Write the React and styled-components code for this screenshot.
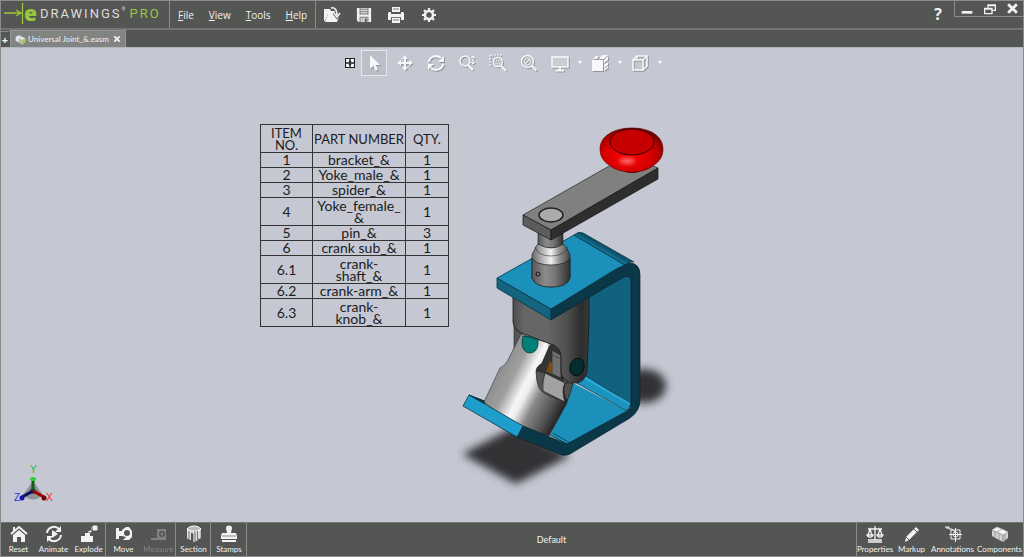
import React from 'react'
import styled, { createGlobalStyle } from 'styled-components'

const GlobalStyle = createGlobalStyle`
    * {
        box-sizing: border-box;
    }
    body {
        margin: 0;
        font-family: 'Open Sans', 'Noto Sans', sans-serif;
        color: #f2f2f2;
    }
    button {
        font: inherit;
        color: inherit;
        background: none;
        border: 0;
        padding: 0;
    }
    svg {
        display: block;
        flex: none;
    }
`

const Window = styled.div`
    display: flex;
    flex-direction: column;
    min-height: 100vh;
    background: #545654;
    border: 1px solid #8b8d8b;
`
const Header = styled.header`
    display: flex;
    height: 29px;
    border-bottom: 2px solid #747674;
`
const Brand = styled.div`
    display: flex;
    align-items: center;
    width: 169px;
    padding: 0 0 3px 3px;
    border-right: 1px solid #8b8d8b;
    font-family: Roboto, sans-serif;
    font-size: 13px;
    letter-spacing: 2px;
    color: #dcdedc;
`
const BrandE = styled.b`
    width: 16px;
    font-family: 'Open Sans', sans-serif;
    font-size: 21px;
    font-weight: 800;
    line-height: 20px;
    letter-spacing: 0;
    color: #9bc53d;
`
const BrandPro = styled.span`
    margin-left: 4px;
    color: #9bc53d;
`
const Reg = styled.sup`
    font-size: 5px;
    letter-spacing: 0;
    line-height: 5px;
    align-self: flex-start;
    margin-top: 6px;
`
const MenuBar = styled.nav`
    display: flex;
    align-items: center;
    gap: 15px;
    padding: 0 8px;
    border-right: 1px solid #8b8d8b;
`
const MenuItem = styled.button`
    font-size: 10px;
    line-height: 16px;
    &::first-letter {
        text-decoration: underline;
    }
`
const QuickBar = styled.div`
    display: flex;
    align-items: center;
    gap: 15px;
    padding-left: 7px;
`
const IconButton = styled.button`
    display: flex;
    align-items: center;
    justify-content: center;
`
const HeaderRight = styled.div`
    display: flex;
    align-items: flex-start;
    margin-left: auto;
`
const HelpButton = styled.button`
    width: 32px;
    padding-top: 2px;
    font-size: 16px;
    font-weight: 700;
    line-height: 22px;
`
const WindowControls = styled.div`
    display: flex;
    align-items: center;
    justify-content: space-between;
    width: 69px;
    height: 16px;
    padding: 0 4px 0 6px;
    border: solid #8b8d8b;
    border-width: 0 0 1px 1px;
`
const TabBar = styled.div`
    display: flex;
    align-items: flex-end;
    height: 17px;
`
const AddTab = styled.button`
    width: 8px;
    height: 16px;
    border-top: 1px solid #8b8d8b;
    font-size: 11px;
    font-weight: 700;
    line-height: 14px;
`
const Tab = styled.div`
    display: flex;
    align-items: center;
    gap: 2px;
    height: 17px;
    margin-left: 1px;
    padding: 0 4px;
    background: #828482;
    border: 1px dotted #a3a5a3;
    border-bottom: 0;
    font-family: Lato, sans-serif;
    font-size: 8px;
    line-height: 12px;
`
const TabClose = styled.button`
    margin-left: 2px;
`
const Canvas = styled.main`
    position: relative;
    flex: 1;
    background: #c5c8d3;
    border-top: 1px solid #b2b5bd;
    color: #1c1c1c;
`
const Toolbar = styled.div`
    display: flex;
    align-items: center;
    justify-content: center;
    gap: 5px;
    padding: 2px 18px 0 0;
`
const Tool = styled(IconButton)`
    width: ${props => props.$small ? '11px' : '26px'};
    height: 26px;
    color: #f8f8f8;
    border: ${props => props.$active ? '1px solid #e6e8ee' : '0'};
    background: ${props => props.$active ? '#bcbfc7' : 'none'};
    svg {
        filter: ${props => props.$small ? 'none' : 'drop-shadow(1px 1px 0 #92959d)'};
    }
`
const Caret = styled.button`
    width: 4px;
    height: 4px;
    border: solid transparent;
    border-width: 3px 2px 0;
    border-top-color: white;
`
const Stage = styled.div`
    display: flex;
    justify-content: center;
    gap: 8px;
    padding: 43px 83px 0 0;
`
const PartsTable = styled.table`
    align-self: flex-start;
    width: 188px;
    margin-top: 5px;
    border-collapse: collapse;
    table-layout: fixed;
    font-family: Lato, sans-serif;
    font-size: 14px;
    line-height: 12px;
    text-align: center;
    white-space: nowrap;
    th, td {
        padding: 0;
        border: 1px solid #333;
        font-weight: 400;
    }
    th {
        font-size: 13px;
    }
`
const Row = styled.tr`
    height: ${props => props.$tall ? '28px' : '15px'};
`
const Col = styled.col`
    width: ${props => props.$width};
`
const Triad = styled.svg`
    position: absolute;
    left: 10px;
    bottom: 16px;
    font: 10px 'Liberation Sans', sans-serif;
`
const Footer = styled.footer`
    display: flex;
    height: 34px;
    border-top: 1px solid #747674;
    font-family: Lato, sans-serif;
    font-size: 8px;
    line-height: 11px;
`
const Group = styled.div`
    display: flex;
    box-shadow: inset ${props => props.$right ? '1px' : '-1px'} 0 #8b8d8b;
`
const Command = styled.button`
    display: flex;
    flex-direction: column;
    align-items: center;
    justify-content: space-between;
    width: ${props => props.$width || '35px'};
    padding: 2px 0 1px;
    white-space: nowrap;
    opacity: ${props => props.disabled ? 0.28 : 1};
`
const Configuration = styled.div`
    flex: 1;
    align-self: center;
    text-align: center;
    font-size: 9px;
`

const paths = {
	open: <>
		<path d="M1 3h6l1 2h5v3H5l-3 7H1z" fill="currentColor" />
		<path d="M5 8h12l-3 8H2z" fill="currentColor" />
		<path d="M8 2c4-1 6 2 6 7M11 7l3 4 3-4" fill="none" stroke="#545654" strokeWidth="3" />
		<path d="M8 2c4-1 6 2 6 7M11 7l3 4 3-4" fill="none" stroke="currentColor" strokeWidth="1.6" />
	</>,
	save: <>
		<path d="M1 1h16v16H3l-2-2z" fill="currentColor" />
		<path d="M4 1h10v8H4zM4 11h10v6H4z" fill="#777977" />
		<path d="M5 2h8M5 4h8M5 6h8M5 8h8" stroke="currentColor" />
		<path d="M5 12h8v5H5z" fill="#c9cbc9" />
		<path d="M10 13h2v4h-2z" fill="#545654" />
	</>,
	print: <>
		<path d="M5 1h8v5H5z" fill="currentColor" />
		<path d="M2 6h2v2h10V6h2l1 1v7h-3v-2H4v2H1V7z" fill="currentColor" />
		<path d="M5 12h8v5H5z" fill="currentColor" />
		<path d="M4 11.5h10M6 14h6M6 3h6" stroke="#777977" />
	</>,
	gear: <>
		<circle cx="9" cy="9" r="4" fill="none" stroke="currentColor" strokeWidth="2.6" />
		<path d="M9 2v3M9 13v3M2 9h3M13 9h3M4 4l2 2M12 12l2 2M14 4l-2 2M4 14l2-2" stroke="currentColor" strokeWidth="2.2" />
	</>,
	grid: <>
		<path d="M1 1h16v16H1z" fill="#fff" stroke="#222" strokeWidth="2" />
		<path d="M9 1v16M1 9h16" fill="none" stroke="#222" strokeWidth="2.500" />
		<path d="M6 7l3-3 3 3zM6 11l3 3 3-3z" fill="#222" />
	</>,
	select: <path d="M5 1v14l3.5-3.3 2.2 5 2.3-1-2.2-4.8h4.5z" fill="currentColor" />,
	move: <path d="M9 1l3 4h-2v3h3V6l4 3-4 3v-2h-3v3h2l-3 4-3-4h2v-3H5v2L1 9l4-3v2h3V5H6z" fill="currentColor" />,
	rotate: <>
		<path d="M2 8a7 6 0 0 1 12-4M16 10a7 6 0 0 1-12 4" fill="none" stroke="currentColor" strokeWidth="2" />
		<path d="M17 2v6h-6zM1 16v-6h6z" fill="currentColor" />
	</>,
	zoom: <>
		<circle cx="7" cy="7" r="5" fill="none" stroke="currentColor" strokeWidth="1.5" />
		<path d="M10 11l5 5" stroke="currentColor" strokeWidth="2" />
		<path d="M15 2v8M13 4l2-2 2 2M13 8l2 2 2-2" fill="none" stroke="currentColor" />
	</>,
	zoomArea: <>
		<path d="M1 12V1h12" fill="none" stroke="currentColor" strokeDasharray="2 1" />
		<circle cx="9" cy="8" r="4.5" fill="none" stroke="currentColor" strokeWidth="1.4" />
		<path d="M7 6h4v4H7z" fill="none" stroke="currentColor" strokeDasharray="1 1" />
		<path d="M12 12l5 5" stroke="currentColor" strokeWidth="2" />
	</>,
	zoomFit: <>
		<circle cx="7.500" cy="7.500" r="6" fill="none" stroke="currentColor" strokeWidth="1.5" />
		<path d="M5 9a3 3 0 0 1 5-4M10 6a3 3 0 0 1-5 4M5 10l5-5" fill="none" stroke="currentColor" />
		<path d="M11.500 11.500l5 5" stroke="currentColor" strokeWidth="2" />
	</>,
	display: <>
		<path d="M1 3h16v10H1z" fill="#c9ccd3" stroke="currentColor" strokeWidth="1.5" />
		<path d="M9 13v3M5 16.500h8" stroke="currentColor" strokeWidth="2" />
	</>,
	perspective: <>
		<path d="M1 6h11v11H1z" fill="currentColor" />
		<path d="M2 5l3-3h3L6 5zM8 5l3-4h6l-4 4z" fill="currentColor" />
		<path d="M13 6l4-4v4l-4 3zM13 11l4-3v3l-4 3zM13 15l4-3v2l-4 3z" fill="currentColor" />
	</>,
	cube: <path d="M2 6h10v10H2zM2 6l4-4h10l-4 4M16 2v10l-4 4M6 2v4" fill="none" stroke="currentColor" strokeWidth="1.5" />,
	reset: <>
		<path d="M1 9l8-7 8 7" fill="none" stroke="currentColor" strokeWidth="2" />
		<path d="M3 2h2v4H3z" fill="currentColor" />
		<path d="M3 10l6-5 6 5v7h-4v-5H7v5H3z" fill="currentColor" />
	</>,
	animate: <>
		<path d="M2 8a7 7 0 0 1 12-4M16 10a7 7 0 0 1-12 4" fill="none" stroke="currentColor" strokeWidth="2" />
		<path d="M16 1v6h-6zM2 17v-6h6zM7 5l6 4-6 4z" fill="currentColor" />
	</>,
	explode: <>
		<path d="M1 11h4V8h5v3h3v6H1z" fill="currentColor" />
		<path d="M8 7h3V5M13 1h4v4h-4zM11 3h1" fill="currentColor" stroke="currentColor" />
	</>,
	moveBox: <>
		<path d="M1 3h3v11H1zM4 6h3v5H4zM7 5l4-3h3l3 4v6l-3 3H8l3-3-4-1z" fill="currentColor" />
		<circle cx="12" cy="8" r="3" fill="#545654" />
	</>,
	measure: <>
		<path d="M7 4h9v11H1v-2h6z" fill="currentColor" />
		<circle cx="12" cy="9" r="3" fill="#545654" />
		<circle cx="12" cy="9" r="1.500" fill="currentColor" />
	</>,
	section: <>
		<path d="M2 4c3-4 11-4 14 0v9l-3 2-4 2V9L6 8v7l-4-2z" fill="#b9bbb9" />
		<path d="M3 5v9M5 6v9M9 7v10M11 6v10M14 4v9M2 4c3 3 11 3 14 0M2 4c3-4 11-4 14 0" fill="none" stroke="#fff" />
		<path d="M4 6v8M10 6v10M12.500 6v9" stroke="#737573" />
	</>,
	stamps: <>
		<path d="M6 3a3 2.500 0 0 1 6 0c0 2-1 3-1 5h5l1 3v3H1v-3l1-3h5c0-2-1-3-1-5z" fill="currentColor" />
		<path d="M2 16h14" stroke="currentColor" strokeWidth="2" />
		<path d="M2 11h14" stroke="#888a88" />
	</>,
	properties: <path d="M9 1v14M2 4h14M4 4l-2 6h4zM14 4l-2 6h4zM1 10c1 3 5 3 6 0zM11 10c1 3 5 3 6 0zM2 15h14M2 17h14" fill="none" stroke="currentColor" strokeWidth="1.300" />,
	markup: <>
		<path d="M13 2l3 3L6 15l-4 2 1-5z" fill="currentColor" />
		<path d="M11 4l3 3M3 12l3 3" stroke="#545654" />
	</>,
	annotations: <>
		<path d="M1 2h4v2h3l3 3M7 5h9v9H7z" fill="none" stroke="currentColor" />
		<circle cx="11.500" cy="9.500" r="2.500" fill="none" stroke="currentColor" />
		<path d="M11.500 3v14M5 9.500h13M2 3h3" stroke="currentColor" />
	</>,
	components: <>
		<path d="M1 5l5-3 11 5v6l-5 4L1 11z" fill="#d2d4d2" />
		<path d="M1 5l11 5v7M12 10l5-3" fill="none" stroke="#858785" />
		<path d="M6 2l5 2-5 3-5-2zM11 4l6 3-5 3-6-3z" fill="#f4f4f4" stroke="#a4a6a4" strokeWidth=".6" />
		<path d="M4 6v6M8 8v7M14 9v6" stroke="#999b99" />
	</>,
	file: <>
		<path d="M1 5l5-3 11 5v6l-5 4L1 11z" fill="#e4e6e4" />
		<path d="M6 7l6 3v7l-6-3z" fill="#b4b6b4" />
		<path d="M12 10l5-3v6l-5 4z" fill="#9bc53d" />
	</>,
	close: <path d="M3 3l12 12M15 3L3 15" stroke="currentColor" strokeWidth="4" />,
	minimize: <path d="M1 14h16" stroke="currentColor" strokeWidth="4" />,
	restore: <>
		<path d="M6 7V3h11v8h-5M6 4h11" fill="none" stroke="currentColor" strokeWidth="2" />
		<path d="M1 8h11v8H1zM1 9h11" fill="none" stroke="currentColor" strokeWidth="2" />
	</>,
}

const Icon = ({ name, size = 18 }) => (
	<svg width={size} height={size} viewBox="0 0 18 18" aria-hidden="true">{paths[name]}</svg>
)

const tools = ['select', 'move', 'rotate', 'zoom', 'zoomArea', 'zoomFit']
const viewTools = ['display', 'perspective', 'cube']

const parts = [
	{ item: '1', name: 'bracket_&', qty: 1 },
	{ item: '2', name: 'Yoke_male_&', qty: 1 },
	{ item: '3', name: 'spider_&', qty: 1 },
	{ item: '4', name: <>Yoke_female_<br />&amp;</>, qty: 1, tall: true },
	{ item: '5', name: 'pin_&', qty: 3 },
	{ item: '6', name: 'crank sub_&', qty: 1 },
	{ item: '6.1', name: <>crank-<br />shaft_&amp;</>, qty: 1, tall: true },
	{ item: '6.2', name: 'crank-arm_&', qty: 1 },
	{ item: '6.3', name: <>crank-<br />knob_&amp;</>, qty: 1, tall: true },
]

const Gradient = ({ id, stops, ...rest }) => (
	<linearGradient id={id} {...rest}>
		{stops.map(([offset, color]) => <stop key={offset} offset={offset} stopColor={color} />)}
	</linearGradient>
)

const Model = () => (
	<svg width="224" height="376" viewBox="457 119 224 376" role="img" aria-label="Universal joint" strokeLinejoin="round">
		<defs>
			<filter id="soft" x="-30%" y="-30%" width="160%" height="160%"><feGaussianBlur stdDeviation="4" /></filter>
			<filter id="glow" x="-50%" y="-50%" width="200%" height="200%"><feGaussianBlur stdDeviation="2" /></filter>
			<Gradient id="neck" stops={[[0, '#555'], [0.35, '#8c8c8c'], [0.6, '#777'], [1, '#303030']]} />
			<Gradient id="shoulder" stops={[[0, '#6a6a6a'], [0.3, '#bbb'], [0.5, '#f2f2f2'], [0.7, '#999'], [1, '#444']]} />
			<Gradient id="yoke" stops={[[0, '#4c4c4c'], [0.15, '#666'], [0.45, '#666'], [0.7, '#505050'], [0.9, '#2c2c2c'], [1, '#3a3a3a']]} />
			<Gradient id="lower" gradientUnits="userSpaceOnUse" x1="489" y1="380" x2="559" y2="416" stops={[[0, '#8a8a8a'], [0.25, '#9e9e9e'], [0.43, '#f6f6f6'], [0.5, '#eee'], [0.65, '#888'], [0.85, '#555'], [1, '#262626']]} />
			<Gradient id="fold" gradientUnits="userSpaceOnUse" x1="604" y1="247" x2="600" y2="254" stops={[[0, '#0c526c'], [1, '#1a90ba']]} />
			<radialGradient id="red" cx=".45" cy=".6" r=".62">
				<stop offset="0" stopColor="#f00" />
				<stop offset=".6" stopColor="#d80000" />
				<stop offset=".8" stopColor="#b00000" />
				<stop offset="1" stopColor="#600" />
			</radialGradient>
		</defs>
		<g filter="url(#soft)" fill="#303134">
			<path d="M462 454l54-28 54 30-54 28z" />
			<ellipse cx="644" cy="386" rx="22" ry="17" />
		</g>

		<path d="M585 288l47-14v132l-49-28z" fill="#11627f" />
		<path d="M571 382l56 29-59 34-18-10 16-32z" fill="#1a90ba" />
		<path d="M583 374l48 30-4 7-54-30z" fill="#1c93bf" stroke="#0a3544" strokeWidth=".7" />
		<path d="M583 377l47 27" stroke="#2cabd8" strokeWidth="2" />
		<path d="M550 435l17 9M553 433l17 10" stroke="#0a3544" strokeWidth=".8" />

		<path d="M469 395l18 7-3 2z" fill="#0b3848" stroke="#06222c" />
		<path d="M514 325l8 8-1 10-7 6z" fill="#555" stroke="#222" strokeWidth=".6" />
		<path d="M521 334l-6 12-7 14q-2 5-8 8l-16 34q30 25 65 34l18-33 2-20-20-20v-20z" fill="url(#lower)" stroke="#333" strokeWidth=".6" />
		<path d="M549 347l5-6 9 12v28l4 10-24-3 2-15-9-2q0-4 6-8z" fill="#343434" stroke="#111" strokeWidth=".6" />
		<path d="M552 350l9 5v23l-9-4z" fill="#707070" stroke="#222" strokeWidth=".6" />
		<path d="M552 350q5 4 9 5M552 355l9 4" stroke="#333" strokeWidth=".6" fill="none" />
		<path d="M550 361l2 2v11l-6-3z" fill="#7a4b0b" />
		<path d="M536 371l9 2q-3 7-1 17 8 7 21 11-20-4-26-13-3-7-3-17z" fill="#555" stroke="#222" strokeWidth=".6" />
		<path d="M545 373l20 10q-4 8 0 19l-22-11q-1-9 2-18z" fill="#a2a2a2" stroke="#222" strokeWidth=".7" />
		<path d="M565 383h8q-2 10-6 18-5-8-2-18z" fill="#505050" stroke="#111" strokeWidth=".6" />
		<path d="M513 297v25q1 10 14 13l21 8q13 3 13 14v17q4 9 14 9 9 0 12-11l2-52v-25z" fill="url(#yoke)" stroke="#161616" strokeWidth=".8" />
		<path d="M523 336q7 0 15 4v4a8 9 0 0 1-16 0q0-4 1-8z" fill="#008079" stroke="#082827" strokeWidth=".7" />
		<ellipse cx="577" cy="367" rx="7" ry="9" transform="rotate(18 577 367)" fill="#042d30" stroke="#000" strokeWidth=".7" />

		<path d="M551 309l60-37q11-8 18-9 11 0 11 12v125q0 11-10 18l-60 36q-4 2-8 1l-45-18 6-11 44 18 60-33q4-3 4-8V281q0-6-7-4l-21 12-52 31z" fill="#0b3848" stroke="#06222c" strokeWidth=".7" />
		<path d="M469 395l54 31-6 11-54-31z" fill="#1e9ecc" stroke="#0a3544" strokeWidth=".8" />
		<path d="M497 278l54 31v11l-54-32z" fill="#12647f" stroke="#0a3544" strokeWidth=".8" />
		<path d="M497 278l77-43 51 30q-6 2-14 7l-60 37z" fill="#1a90ba" stroke="#0a3544" strokeWidth=".8" />
		<path d="M574 235q4-4 9-2l51 29q-3-1-9 3z" fill="url(#fold)" stroke="#0a3544" strokeWidth=".8" />

		<path d="M538 228h25v20h-25z" fill="url(#neck)" stroke="#222" strokeWidth=".6" />
		<path d="M538 244q-2 2-4 7-2 2-2 5v22q3 9 19 9t19-9v-22q0-3-2-5-2-5-5-7-11 8-25 0z" fill="url(#shoulder)" stroke="#222" strokeWidth=".7" />
		<path d="M532 258v20q3 9 19 9t19-9v-20q-4 7-19 7t-19-7z" fill="url(#neck)" stroke="#222" strokeWidth=".7" />
		<path d="M535 247q3 9 16 9t17-9" fill="none" stroke="#333" strokeWidth=".6" />
		<circle cx="538" cy="274" r="2" fill="#777" stroke="#111" />

		<path d="M523 215l88-50h40l7 3-107 62z" fill="#808080" stroke="#222" strokeWidth=".7" />
		<path d="M523 215l28 15v10l-28-15z" fill="#5c5c5c" stroke="#161616" strokeWidth=".7" />
		<path d="M551 230l107-62v11l-107 61z" fill="#2e2e2e" stroke="#161616" strokeWidth=".7" />
		<ellipse cx="551" cy="215" rx="12" ry="7" fill="#ababab" stroke="#222" strokeWidth="1.500" />

		<ellipse cx="632" cy="169" rx="10" ry="4" fill="#650000" />
		<path d="M600 149c0-13 14-21 32-21s31 8 31 21c0 7-3 12-9 16-6 5-13 7-22 7s-17-2-23-7c-6-4-9-9-9-16z" fill="url(#red)" stroke="#600" strokeWidth=".6" />
		<ellipse cx="627" cy="161" rx="8" ry="3" fill="#ff6c6c" filter="url(#glow)" />
		<ellipse cx="632" cy="142" rx="22" ry="13" fill="#c60000" stroke="#2c0000" />
	</svg>
)

const Axes = () => (
	<Triad width="44" height="42" viewBox="11 462 44 42" role="img" aria-label="Axes">
		<path d="M33 479l10 14q-10 9-20 0z" fill="#909299" />
		<path d="M33 484l6 8H27z" fill="#55575c" />
		<path d="M33 478v12" stroke="#145c18" strokeWidth="3" />
		<path d="M33 489l-11 6" stroke="#101060" strokeWidth="3" />
		<path d="M33 489l11 6" stroke="#a00000" strokeWidth="3" />
		<ellipse cx="33" cy="477" rx="3" ry="2" fill="#2bd13a" />
		<circle cx="22" cy="496" r="2.500" fill="#1515b0" />
		<circle cx="44" cy="496" r="2.500" fill="#7c0000" />
		<text x="30" y="471" fill="#25b843">Y</text>
		<text x="14" y="499" fill="#3333dd">Z</text>
		<text x="46" y="499" fill="#f02020">X</text>
	</Triad>
)

export default function App() {
	return (
		<Window>
			<GlobalStyle />
			<Header>
				<Brand>
					<svg width="20" height="24" viewBox="0 0 20 24" aria-hidden="true">
						<path d="M0 12h17M12 9l5 3-5 3M18.500 2v21" fill="none" stroke="#9bc53d" strokeWidth="1.300" />
					</svg>
					<BrandE>e</BrandE>
					<span>DRAWINGS</span><Reg>®</Reg>
					<BrandPro>PRO</BrandPro>
				</Brand>
				<MenuBar>
					{['File', 'View', 'Tools', 'Help'].map(label => <MenuItem key={label}>{label}</MenuItem>)}
				</MenuBar>
				<QuickBar>
					<IconButton aria-label="Open"><Icon name="open" /></IconButton>
					<IconButton aria-label="Save"><Icon name="save" size={16} /></IconButton>
					<IconButton aria-label="Print"><Icon name="print" /></IconButton>
					<IconButton aria-label="Options"><Icon name="gear" /></IconButton>
				</QuickBar>
				<HeaderRight>
					<HelpButton>?</HelpButton>
					<WindowControls>
						<IconButton aria-label="Minimize"><Icon name="minimize" size={12} /></IconButton>
						<IconButton aria-label="Restore"><Icon name="restore" size={12} /></IconButton>
						<IconButton aria-label="Close"><Icon name="close" size={13} /></IconButton>
					</WindowControls>
				</HeaderRight>
			</Header>
			<TabBar>
				<AddTab>+</AddTab>
				<Tab>
					<Icon name="file" size={11} />
					<span>Universal Joint_&amp;.easm</span>
					<TabClose aria-label="Close tab"><Icon name="close" size={8} /></TabClose>
				</Tab>
			</TabBar>
			<Canvas>
				<Toolbar>
					<Tool $small aria-label="Toolbar layout"><Icon name="grid" size={10} /></Tool>
					{tools.map(name => (
						<Tool key={name} $active={name === 'select'} aria-label={name}><Icon name={name} /></Tool>
					))}
					{viewTools.map(name => (
						<React.Fragment key={name}>
							<Tool aria-label={name}><Icon name={name} /></Tool>
							<Caret aria-label={name + ' options'} />
						</React.Fragment>
					))}
				</Toolbar>
				<Stage>
					<PartsTable>
						<colgroup>
							<Col $width="52px" />
							<Col $width="93px" />
							<Col $width="43px" />
						</colgroup>
						<thead>
							<Row $tall>
								<th>ITEM<br />NO.</th>
								<th>PART NUMBER</th>
								<th>QTY.</th>
							</Row>
						</thead>
						<tbody>
							{parts.map(part => (
								<Row key={part.item} $tall={part.tall}>
									<td>{part.item}</td>
									<td>{part.name}</td>
									<td>{part.qty}</td>
								</Row>
							))}
						</tbody>
					</PartsTable>
					<Model />
				</Stage>
				<Axes />
			</Canvas>
			<Footer>
				<Group>
					<Command><Icon name="reset" />Reset</Command>
					<Command><Icon name="animate" />Animate</Command>
					<Command><Icon name="explode" />Explode</Command>
				</Group>
				<Group>
					<Command><Icon name="moveBox" />Move</Command>
					<Command disabled><Icon name="measure" />Measure</Command>
				</Group>
				<Group>
					<Command><Icon name="section" />Section</Command>
				</Group>
				<Group>
					<Command $width="36px"><Icon name="stamps" />Stamps</Command>
				</Group>
				<Configuration>Default</Configuration>
				<Group $right>
					<Command $width="38px"><Icon name="properties" />Properties</Command>
					<Command><Icon name="markup" />Markup</Command>
					<Command $width="47px"><Icon name="annotations" />Annotations</Command>
					<Command $width="47px"><Icon name="components" />Components</Command>
				</Group>
			</Footer>
		</Window>
	)
}
